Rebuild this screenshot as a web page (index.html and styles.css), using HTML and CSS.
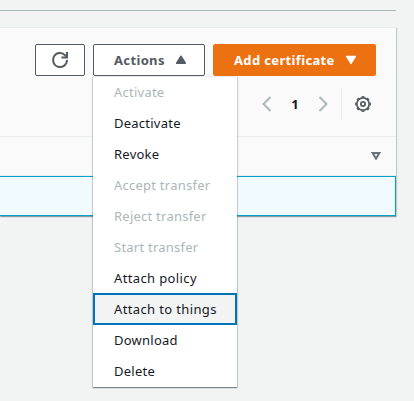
FILE: index.html
```html
<!DOCTYPE html>
<html lang="en">
<head>
<meta charset="utf-8">
<title>Certificates</title>
<link rel="stylesheet" href="styles.css">
</head>
<body>
<main class="page">
  <hr class="rule">
  <section class="panel">
    <header class="toolbar">
      <button class="btn btn-refresh" aria-label="Refresh">
        <svg width="18" height="18" viewBox="0 0 18 18" fill="none" stroke="currentColor" stroke-width="2"><path d="M16 9A7 7 0 1 1 14.2 4.3L16 6"/><path d="M16 1v5.6h-5.6"/></svg>
      </button>
      <div class="dropdown">
        <button class="btn btn-actions"><span>Actions</span>
          <svg width="12" height="10" viewBox="0 0 12 10"><path d="M6 1.2 10.4 8.2H1.6Z" fill="currentColor" stroke="currentColor" stroke-width="1.4" stroke-linejoin="round"/></svg>
        </button>
        <ul class="menu">
          <li class="item disabled">Activate</li>
          <li class="item">Deactivate</li>
          <li class="item">Revoke</li>
          <li class="item disabled">Accept transfer</li>
          <li class="item disabled">Reject transfer</li>
          <li class="item disabled">Start transfer</li>
          <li class="item wide">Attach policy</li>
          <li class="item wide focused">Attach to things</li>
          <li class="item">Download</li>
          <li class="item">Delete</li>
        </ul>
      </div>
      <button class="btn btn-add"><span>Add certificate</span>
        <svg width="12" height="10" viewBox="0 0 12 10"><path d="M6 8.4 1.6 1.4h8.8Z" fill="currentColor" stroke="currentColor" stroke-width="1.4" stroke-linejoin="round"/></svg>
      </button>
    </header>
    <nav class="pager">
      <svg class="chev" width="10" height="16" viewBox="0 0 10 16"><path d="M8.5 1 1.5 8l7 7"/></svg>
      <span class="num">1</span>
      <svg class="chev" width="10" height="16" viewBox="0 0 10 16"><path d="m1.5 1 7 7-7 7"/></svg>
      <span class="divider"></span>
      <svg class="gear" width="16" height="16" viewBox="0 0 16 16"><circle cx="8" cy="8" r="6.2" stroke-width="1.7"/><circle cx="8" cy="8" r="7.2" stroke-width="1.5" pathLength="16" stroke-dasharray="1 1" stroke-dashoffset=".5"/><circle cx="8" cy="8" r="2.1" stroke-width="1.8"/></svg>
    </nav>
    <div class="thead">
      <svg width="10" height="8" viewBox="0 0 10 8"><path d="M1.6 1h6.8L5 6.6Z" fill="none" stroke="#687078" stroke-width="2"/></svg>
    </div>
    <div class="row"></div>
  </section>
</main>
</body>
</html>
```
FILE: styles.css
```css
* { box-sizing: border-box; }
body {
  margin: 0;
  background: #f2f3f3;
  font-family: "Noto Sans", sans-serif;
  color: #16191f;
}
.page { width: 414px; height: 401px; padding: 10px 18px 0 0; overflow: hidden; }
.rule { height: 1px; margin: 0 0 16px; border: 0; background: #aab7b8; }
.panel {
  height: 189px;
  background: #fafafa;
  border-top: 1px solid #eaeded;
  box-shadow: 0 1px 1px 0 rgba(0, 28, 36, .3), 1px 1px 1px 0 rgba(0, 28, 36, .15);
}
.toolbar { display: flex; gap: 8px; justify-content: flex-end; padding: 16px 20px 0 0; height: 48px; }
.btn {
  display: flex;
  align-items: center;
  height: 32px;
  padding: 0 0 0 20px;
  border: 1px solid #545b64;
  border-radius: 2px;
  background: #fff;
  color: #545b64;
  font: 700 13px/20px "Noto Sans", sans-serif;
  letter-spacing: .35px;
}
.btn-refresh { width: 50px; padding: 0; justify-content: center; }
.btn-actions { width: 112px; gap: 10px; }
.btn-add { width: 163px; gap: 10px; background: #ec7211; border-color: #ec7211; color: #fff; }
.dropdown { position: relative; }
.menu {
  position: absolute;
  z-index: 2;
  top: 32px;
  left: 0;
  width: 144px;
  height: 311px;
  margin: 0;
  padding: 0;
  list-style: none;
  background: #fff;
  border-top: 1px solid #eaeded;
  box-shadow: 0 1px 1px 0 rgba(0, 28, 36, .3), 1px 1px 1px 0 rgba(0, 28, 36, .15), -1px 1px 1px 0 rgba(0, 28, 36, .15);
}
.item {
  height: 32px;
  margin-bottom: -1px;
  padding: 0 0 0 21px;
  font-size: 13px;
  line-height: 32px;
  letter-spacing: .24px;
  white-space: nowrap;
}
.item:first-child { margin-top: -1px; }
.disabled { color: #aab7b8; }
.wide { letter-spacing: .37px; }
.focused { position: relative; padding-left: 19px; line-height: 28px; background: #f2f3f3; border: 2px solid #0073bb; }
.pager { display: flex; align-items: center; height: 60px; padding: 12px 25px 16px 262px; }
.chev { fill: none; stroke: #aab7b8; stroke-width: 2; }
.num { width: 46px; text-align: center; font-size: 13px; font-weight: 700; }
.divider { width: 1px; height: 32px; margin: 0 13px 0 13px; background: #eaeded; }
.gear { fill: none; stroke: #545b64; flex: none; overflow: visible; }
.thead {
  display: flex;
  align-items: center;
  justify-content: flex-end;
  height: 40px;
  padding-right: 15px;
  border-top: 1px solid #eaeded;
  border-bottom: 1px solid #eaeded;
}
.row { height: 40px; background: #f1faff; border: 1px solid #00a1c9; border-left: 0; }
```
